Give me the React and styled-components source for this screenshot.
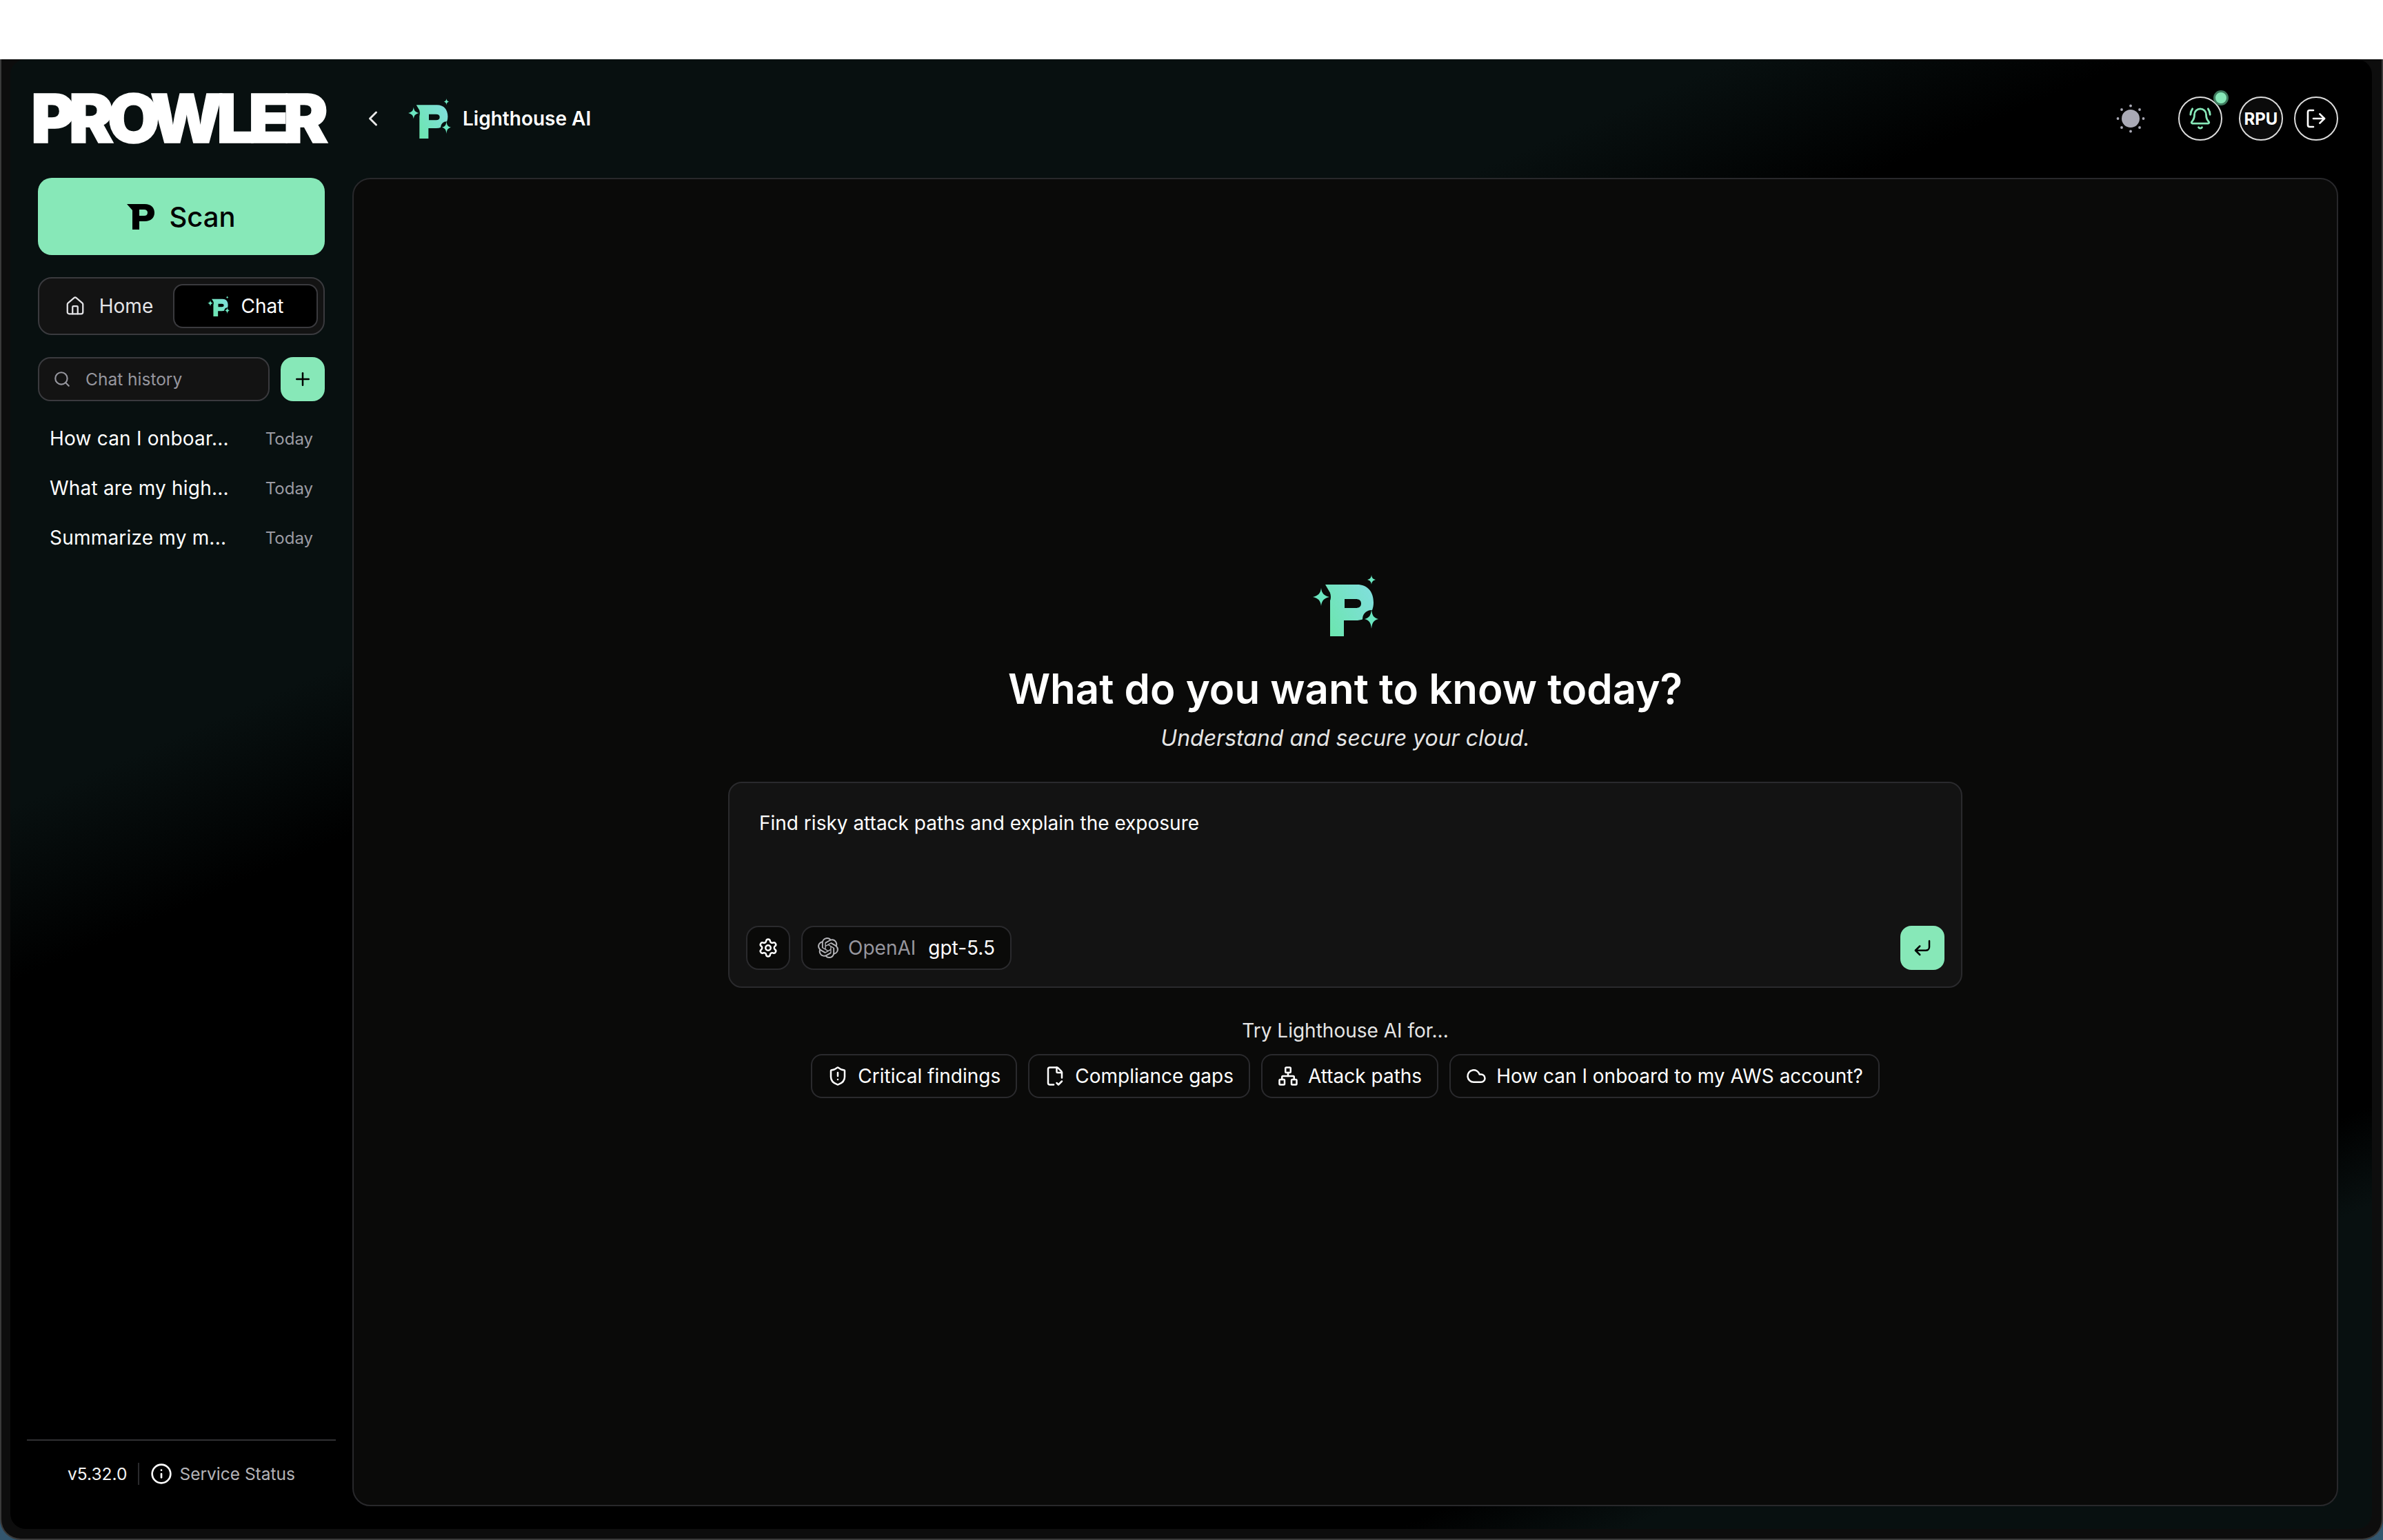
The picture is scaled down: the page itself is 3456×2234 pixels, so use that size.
import React from "react";
import styled, { createGlobalStyle } from "styled-components";
import {
  ChevronLeft, House, Search, Plus, Settings, CornerDownLeft, ShieldAlert,
  FileCheck2, Network, Cloud, Info, BellRing, LogOut,
} from "lucide-react";
import { SiOpenai } from "react-icons/si";

const Global = createGlobalStyle`
  html, body { margin: 0; padding: 0; background: #fff; }
  * { box-sizing: border-box; }
  body { font-family: Inter, "Noto Sans", sans-serif; color: #fff; }
`;

const Page = styled.div`
  width: 3456px;
  height: 2234px;
  display: flex;
  flex-direction: column;
  overflow: hidden;
`;
const TopGap = styled.div`height: 86px; background: #fff; flex: none;`;
const Desktop = styled.div`
  flex: 1;
  min-height: 0;
  display: flex;
  background: linear-gradient(180deg, #1c3f66 0%, #33566e 100%);
`;
const Window = styled.div`
  flex: 1;
  min-width: 0;
  display: flex;
  padding: 0 14px 14px 13px;
  background: #0d0d0d;
  border: 2px solid #3a3a3a;
  border-top: 0;
  border-radius: 0 0 30px 30px;
`;
const Inner = styled.div`
  flex: 1;
  min-width: 0;
  display: grid;
  grid-template-columns: 496px 1fr;
  border-radius: 22px;
  background: linear-gradient(156.5deg, #081010 0%, #081010 30%, #000 37%, #000 83%, #081010 87%, #081010 100%);
`;
const Sidebar = styled.aside`
  display: flex;
  flex-direction: column;
  padding: 0 24px;
  min-height: 0;
`;
const LogoRow = styled.div`
  height: 172px;
  flex: none;
  display: flex;
  align-items: center;
  padding-left: 6px;
`;
const Wordmark = styled.span`
  font-family: Inter, sans-serif;
  font-weight: 900;
  font-size: 98px;
  line-height: 1;
  letter-spacing: -9.5px;
  color: #fff;
  -webkit-text-stroke: 1.5px #fff;
`;
const SideStack = styled.div`
  flex: 1;
  display: flex;
  flex-direction: column;
  padding: 0 16px;
  min-height: 0;
`;
const ScanButton = styled.button`
  height: 112px;
  flex: none;
  display: flex;
  align-items: center;
  justify-content: center;
  gap: 21px;
  border: 0;
  border-radius: 20px;
  background: #87e8b8;
  color: #000;
  font-family: inherit;
  font-size: 40px;
  font-weight: 500;
`;
const NavBox = styled.nav`
  margin-top: 32px;
  height: 84px;
  flex: none;
  display: grid;
  grid-template-columns: 186px 210px;
  padding: 8px 8px;
  border: 2px solid #3a3a3e;
  border-radius: 20px;
  background: #131313;
`;
const NavTab = styled.div`
  display: flex;
  align-items: center;
  justify-content: center;
  gap: ${(p) => (p.$active ? "17px" : "20px")};
  font-size: 28px;
  color: ${(p) => (p.$active ? "#fff" : "#e4e4e7")};
  background: ${(p) => (p.$active ? "#000" : "transparent")};
  border: 2px solid ${(p) => (p.$active ? "#3a3a3e" : "transparent")};
  border-radius: 14px;
`;
const SearchRow = styled.div`
  margin-top: 32px;
  flex: none;
  display: flex;
  gap: 16px;
  height: 64px;
`;
const SearchBox = styled.div`
  flex: 1;
  display: flex;
  align-items: center;
  gap: 21px;
  padding: 0 20px;
  border: 2px solid #3a3a3e;
  border-radius: 18px;
  background: #131313;
  color: #96969e;
  font-size: 24.5px;
`;
const AddButton = styled.button`
  width: 64px;
  border: 0;
  border-radius: 18px;
  background: #87e8b8;
  display: grid;
  place-items: center;
  color: #000;
  padding: 0;
`;
const History = styled.ul`
  list-style: none;
  margin: 18px 0 0;
  padding: 0;
`;
const HistoryRow = styled.li`
  height: 72px;
  display: flex;
  align-items: center;
  justify-content: space-between;
  padding: 0 17px;
`;
const HistoryTitle = styled.span`
  font-size: 28px;
  color: #fff;
  letter-spacing: 0.2px;
`;
const HistoryDate = styled.span`
  font-size: 24px;
  color: #9b9ba3;
`;
const Footer = styled.footer`
  flex: none;
  height: 130px;
  border-top: 2px solid #303033;
  display: flex;
  justify-content: center;
  align-items: flex-start;
  padding-top: 32px;
  gap: 16px;
  font-size: 24.5px;
  line-height: 32px;
`;
const Version = styled.span`color: #f2f2f2;`;
const Divider = styled.span`
  width: 2px;
  height: 32px;
  background: #2a2a2d;
`;
const StatusLink = styled.span`
  display: flex;
  align-items: center;
  gap: 10px;
  color: #b4b4b8;
  & > svg { color: #fff; }
`;

const Content = styled.div`
  display: flex;
  flex-direction: column;
  min-width: 0;
  padding: 0 49px 33px 0;
`;
const Header = styled.header`
  height: 172px;
  flex: none;
  display: flex;
  align-items: center;
  padding-bottom: 0;
`;
const BackIcon = styled.span`
  display: flex;
  color: #e8e8e8;
  margin-left: 12px;
  margin-right: 33px;
`;
const PageTitle = styled.h1`
  margin: 0 0 0 17px;
  font-size: 28px;
  font-weight: 600;
  color: #fff;
`;
const HeaderActions = styled.div`
  margin-left: auto;
  display: flex;
  align-items: center;
  gap: 16px;
`;
const ThemeToggle = styled.span`
  display: flex;
  color: #a9a9b5;
  margin-right: 32px;
`;
const CircleButton = styled.div`
  position: relative;
  width: 64px;
  height: 64px;
  border-radius: 50%;
  border: 2px solid #dcdcdc;
  background: ${(p) => (p.$filled ? "#0b0b0b" : "transparent")};
  display: grid;
  place-items: center;
  color: ${(p) => p.$tone || "#fff"};
  font-size: 24px;
  font-weight: 700;
  margin-right: ${(p) => p.$gap || "0"};
`;
const Badge = styled.span`
  position: absolute;
  top: -11px;
  right: -11px;
  width: 22px;
  height: 22px;
  border-radius: 50%;
  background: #87e8b8;
  border: 3px solid #3f7a5e;
`;
const Panel = styled.main`
  flex: 1;
  min-height: 0;
  border: 2px solid #28282b;
  border-radius: 26px;
  background: #0a0a09;
  display: flex;
  flex-direction: column;
  align-items: center;
  padding-top: 574px;
`;
const Headline = styled.h2`
  margin: 38px 0 0;
  font-size: 60px;
  line-height: 76px;
  font-weight: 600;
  color: #fff;
`;
const Tagline = styled.p`
  margin: 12px 0 0;
  font-size: 32px;
  line-height: 44px;
  font-style: italic;
  color: #e5e5e5;
`;
const Composer = styled.section`
  margin-top: 41px;
  width: 1790px;
  height: 299px;
  flex: none;
  display: flex;
  flex-direction: column;
  justify-content: space-between;
  padding: 40px 24px 24px;
  border: 2px solid #2a2a2d;
  border-radius: 20px;
  background: #131313;
`;
const Prompt = styled.div`
  padding-left: 19px;
  font-size: 28px;
  line-height: 36px;
  color: #fff;
`;
const ComposerBar = styled.div`
  display: flex;
  align-items: center;
  gap: 16px;
`;
const ToolButton = styled.div`
  height: 64px;
  min-width: 64px;
  display: flex;
  align-items: center;
  justify-content: center;
  gap: 14px;
  padding: ${(p) => (p.$wide ? "0 22px" : "0")};
  border: 2px solid #2a2a2d;
  border-radius: 18px;
  background: #0a0a09;
  color: #fff;
  font-size: 28px;
`;
const ModelVendor = styled.span`color: #96969e; margin-right: 4px;`;
const SendButton = styled.button`
  margin-left: auto;
  width: 64px;
  height: 64px;
  border: 0;
  padding: 0;
  border-radius: 16px;
  background: #87e8b8;
  color: #000;
  display: grid;
  place-items: center;
`;
const TryLabel = styled.p`
  margin: 44px 0 0;
  font-size: 28px;
  line-height: 36px;
  color: #e5e5e5;
`;
const Chips = styled.div`
  margin-top: 16px;
  display: flex;
  gap: 16px;
`;
const Chip = styled.div`
  height: 64px;
  display: flex;
  align-items: center;
  gap: 14px;
  padding: 0 22px;
  border: 2px solid #2a2a2d;
  border-radius: 16px;
  font-size: 28px;
  color: #fff;
`;

const LighthouseMark = ({ id, size }) => (
  <svg width={size} height={(size * 89) / 95} viewBox="0 0 95 89" aria-hidden="true">
    <defs>
      <linearGradient id={`${id}-g`} x1="0" y1="0.9" x2="1" y2="0.3">
        <stop offset="0" stopColor="#6be6ad" />
        <stop offset="1" stopColor="#7fdfd9" />
      </linearGradient>
      <mask id={`${id}-m`}>
        <rect width="95" height="89" fill="#fff" />
        <circle cx="12" cy="32" r="14" fill="#000" />
        <circle cx="85" cy="64" r="13" fill="#000" />
      </mask>
    </defs>
    <path
      mask={`url(#${id}-m)`}
      fill={`url(#${id}-g)`}
      fillRule="evenodd"
      d="M18 14H64C79 14 88 24 88 40C88 56 78 66 62 66H45V89H25V26ZM46 35V48H62C67 48 70 46 70 41.500C70 37 67 35 62 35Z"
    />
    <path fill="#6be6c0" d="M12 19C13 27 16 30 24 32C16 34 13 37 12 45C11 37 8 34 0 32C8 30 11 27 12 19Z" />
    <path fill="#6be6c0" d="M85 50C86 59 88 62 95 64C88 66 86 69 85 78C84 69 82 66 75 64C82 62 84 59 85 50Z" />
    <path fill="#6be6c0" d="M85 0C85.500 4 87 6 91 7C87 8 85.500 10 85 14C84.500 10 83 8 79 7C83 6 84.500 4 85 0Z" />
  </svg>
);

const ScanGlyph = () => (
  <svg width="40" height="37" viewBox="0 0 40 37" aria-hidden="true">
    <path
      fill="#000"
      fillRule="evenodd"
      d="M0 0H26C35 0 40 5 40 12.500C40 20 35 25 26 25H18V37H8V9ZM18 8V17H25C28 17 30 15.500 30 12.500C30 9.500 28 8 25 8Z"
    />
  </svg>
);

const SunGlyph = () => (
  <svg width="42" height="42" viewBox="0 0 42 42" aria-hidden="true" fill="currentColor">
    <circle cx="21" cy="21" r="13" />
    <circle cx="21" cy="2.500" r="1.900" />
    <circle cx="21" cy="39.500" r="1.900" />
    <circle cx="2.500" cy="21" r="1.900" />
    <circle cx="39.500" cy="21" r="1.900" />
    <circle cx="8" cy="8" r="1.900" />
    <circle cx="34" cy="8" r="1.900" />
    <circle cx="8" cy="34" r="1.900" />
    <circle cx="34" cy="34" r="1.900" />
  </svg>
);

const historyItems = ["How can I onboar...", "What are my high...", "Summarize my m..."];
const suggestions = [
  { icon: ShieldAlert, label: "Critical findings" },
  { icon: FileCheck2, label: "Compliance gaps" },
  { icon: Network, label: "Attack paths" },
  { icon: Cloud, label: "How can I onboard to my AWS account?" },
];

export default function App() {
  return (
    <Page>
      <Global />
      <TopGap />
      <Desktop>
        <Window>
          <Inner>
            <Sidebar>
              <LogoRow><Wordmark>PROWLER</Wordmark></LogoRow>
              <SideStack>
                <ScanButton><ScanGlyph />Scan</ScanButton>
                <NavBox>
                  <NavTab><House size={30} strokeWidth={1.8} />Home</NavTab>
                  <NavTab $active><LighthouseMark id="nav" size={32} />Chat</NavTab>
                </NavBox>
                <SearchRow>
                  <SearchBox><Search size={26} strokeWidth={2} />Chat history</SearchBox>
                  <AddButton aria-label="New chat"><Plus size={30} strokeWidth={2} /></AddButton>
                </SearchRow>
                <History>
                  {historyItems.map((t) => (
                    <HistoryRow key={t}>
                      <HistoryTitle>{t}</HistoryTitle>
                      <HistoryDate>Today</HistoryDate>
                    </HistoryRow>
                  ))}
                </History>
              </SideStack>
              <Footer>
                <Version>v5.32.0</Version>
                <Divider />
                <StatusLink><Info size={32} strokeWidth={2} />Service Status</StatusLink>
              </Footer>
            </Sidebar>
            <Content>
              <Header>
                <BackIcon><ChevronLeft size={36} strokeWidth={2} /></BackIcon>
                <LighthouseMark id="head" size={62} />
                <PageTitle>Lighthouse AI</PageTitle>
                <HeaderActions>
                  <ThemeToggle><SunGlyph /></ThemeToggle>
                  <CircleButton $tone="#87e8b8" $gap="8px"><BellRing size={34} strokeWidth={2} /><Badge /></CircleButton>
                  <CircleButton $filled>RPU</CircleButton>
                  <CircleButton><LogOut size={32} strokeWidth={2} /></CircleButton>
                </HeaderActions>
              </Header>
              <Panel>
                <LighthouseMark id="hero" size={95} />
                <Headline>What do you want to know today?</Headline>
                <Tagline>Understand and secure your cloud.</Tagline>
                <Composer>
                  <Prompt>Find risky attack paths and explain the exposure</Prompt>
                  <ComposerBar>
                    <ToolButton><Settings size={30} strokeWidth={2} /></ToolButton>
                    <ToolButton $wide>
                      <SiOpenai size={30} color="#b4b4b8" />
                      <ModelVendor>OpenAI</ModelVendor>
                      gpt-5.5
                    </ToolButton>
                    <SendButton aria-label="Send"><CornerDownLeft size={30} strokeWidth={2} /></SendButton>
                  </ComposerBar>
                </Composer>
                <TryLabel>Try Lighthouse AI for...</TryLabel>
                <Chips>
                  {suggestions.map(({ icon: Icon, label }) => (
                    <Chip key={label}><Icon size={30} strokeWidth={2} />{label}</Chip>
                  ))}
                </Chips>
              </Panel>
            </Content>
          </Inner>
        </Window>
      </Desktop>
    </Page>
  );
}
